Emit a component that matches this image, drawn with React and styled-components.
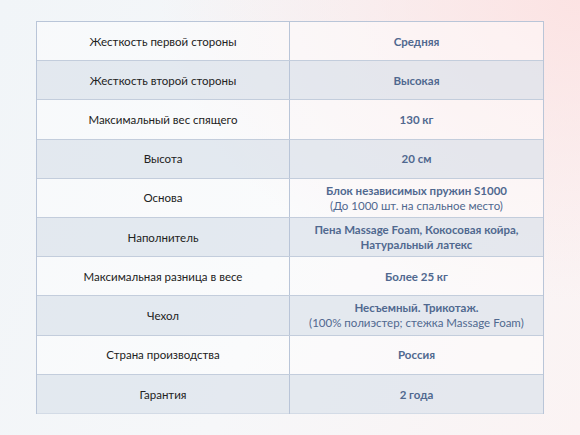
import React from "react";
import styled, { createGlobalStyle } from "styled-components";

const GlobalStyle = createGlobalStyle`
  html, body {
    margin: 0;
    padding: 0;
  }
  body {
    font-family: "Lato", "Open Sans", sans-serif;
  }
`;

const rows = [
  { label: "Жесткость первой стороны", value: ["Средняя"] },
  { label: "Жесткость второй стороны", value: ["Высокая"] },
  { label: "Максимальный вес спящего", value: ["130 кг"] },
  { label: "Высота", value: ["20 см"] },
  {
    label: "Основа",
    value: ["Блок независимых пружин S1000"],
    note: "(До 1000 шт. на спальное место)",
  },
  {
    label: "Наполнитель",
    value: ["Пена Massage Foam, Кокосовая койра,", "Натуральный латекс"],
  },
  { label: "Максимальная разница в весе", value: ["Более 25 кг"] },
  {
    label: "Чехол",
    value: ["Несъемный. Трикотаж."],
    note: "(100% полиэстер; стежка Massage Foam)",
  },
  { label: "Страна производства", value: ["Россия"] },
  { label: "Гарантия", value: ["2 года"] },
];

const App = () => {
  return (
    <Page>
      <GlobalStyle />
      <Table>
        {rows.map((row, i) => (
          <Row key={row.label} $shaded={i % 2 === 1} $last={i === rows.length - 1}>
            <Label>{row.label}</Label>
            <Value>
              {row.value.map((line) => (
                <Strong key={line}>{line}</Strong>
              ))}
              {row.note && <Note>{row.note}</Note>}
            </Value>
          </Row>
        ))}
      </Table>
    </Page>
  );
};

export default App;

const Page = styled.div`
  width: 580px;
  height: 435px;
  box-sizing: border-box;
  padding: 21px 36px 0 36px;
  overflow: hidden;
  background:
    radial-gradient(ellipse 420px 300px at 100% 0%, rgba(252, 226, 226, 0.95), rgba(252, 226, 226, 0) 100%),
    linear-gradient(110deg, #f1f5f8 0%, #f6f7f9 50%, #fbf3f3 100%);
`;

const Table = styled.div`
  display: grid;
  grid-template-rows: repeat(10, 39.2px);
  border: 1px solid #b9c5d8;
  box-sizing: border-box;
  height: 393px;
`;

const Row = styled.div`
  display: grid;
  grid-template-columns: 1fr 1fr;
  background: ${(p) => (p.$shaded ? "rgba(220, 227, 236, 0.72)" : "rgba(255, 255, 255, 0.45)")};
  border-bottom: ${(p) => (p.$last ? "none" : "1px solid #c3cddc")};
`;

const Cell = styled.div`
  display: flex;
  flex-direction: column;
  align-items: center;
  justify-content: center;
  text-align: center;
  font-size: 11.5px;
  line-height: 15px;
`;

const Label = styled(Cell)`
  color: #222222;
  border-right: 1px solid #b9c5d8;
`;

const Value = styled(Cell)`
  color: #50688f;
`;

const Strong = styled.span`
  font-weight: 700;
`;

const Note = styled.span`
  font-weight: 400;
`;
